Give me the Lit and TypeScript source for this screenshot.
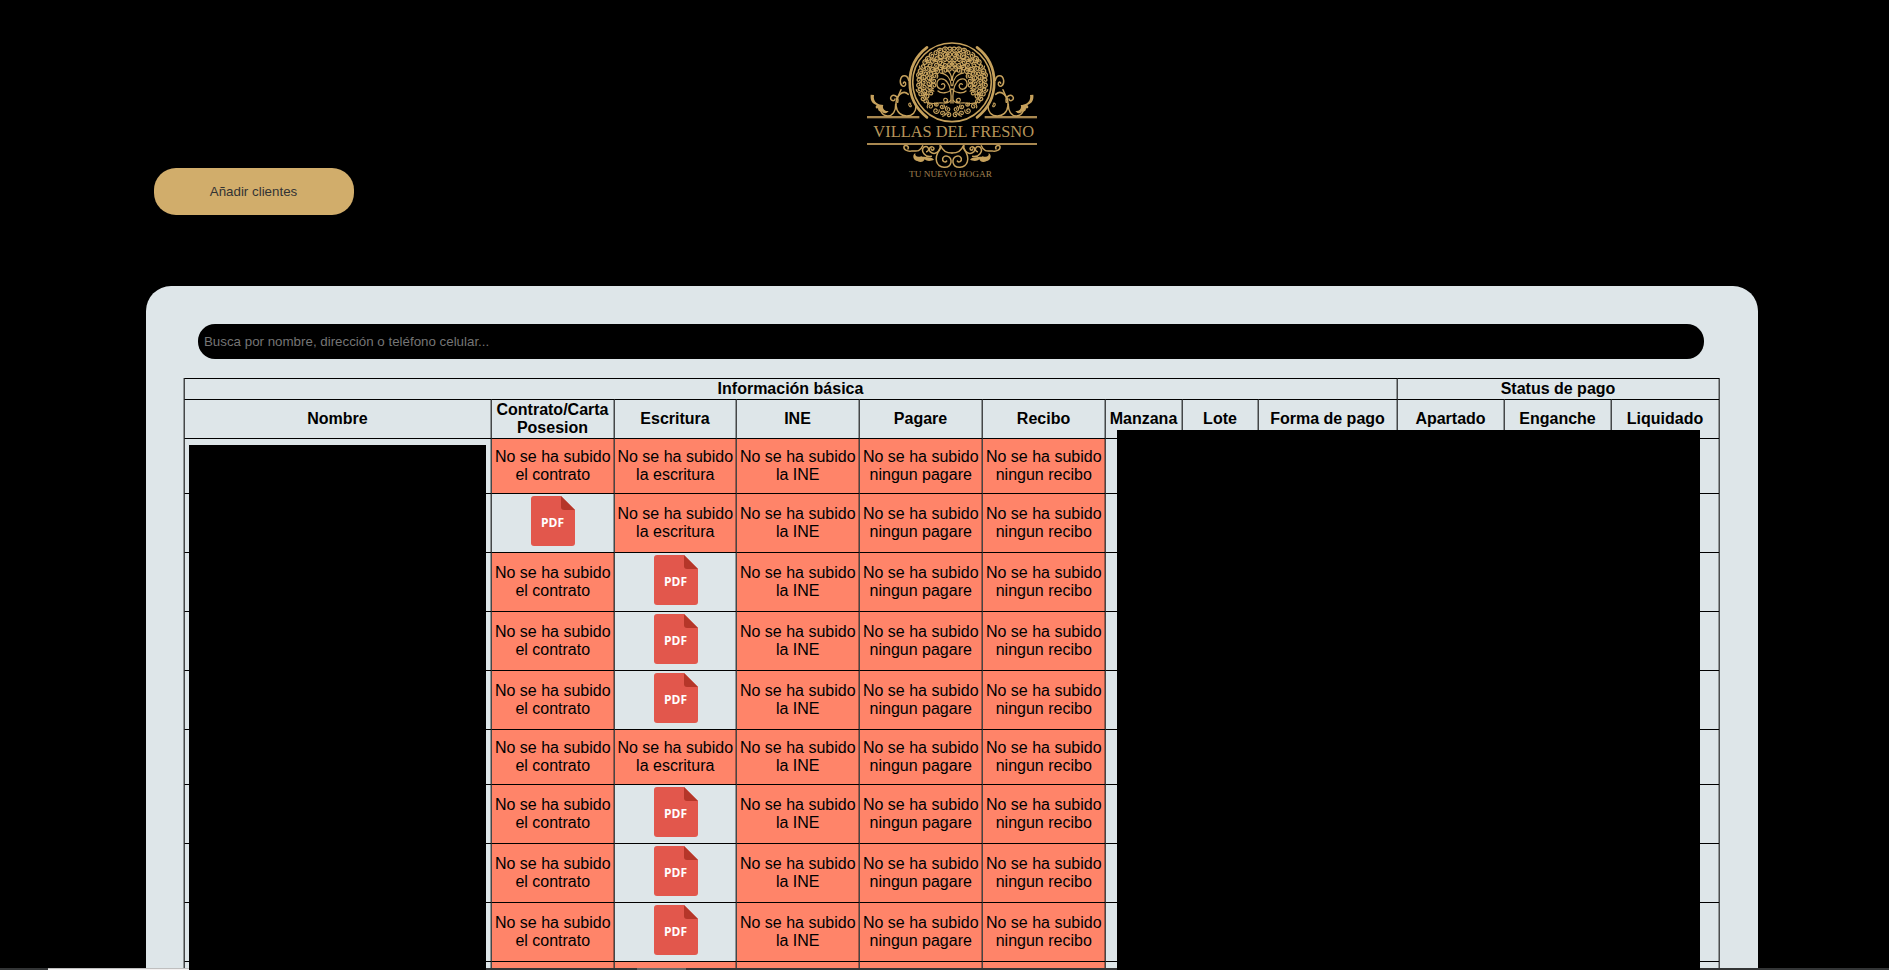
import { LitElement, html, css, svg } from "lit";
import { customElement, property } from "lit/decorators.js";
import { classMap } from "lit/directives/class-map.js";

const spiral = (cx: number, cy: number, r: number, start: number, dir: number, turns = 1.3) => {
  const steps = 16;
  let d = "";
  for (let i = 0; i <= steps; i++) {
    const t = i / steps;
    const a = start + dir * t * turns * Math.PI * 2;
    const k = r * (1 - t * 0.78);
    d += `${i ? "L" : "M"}${(cx + Math.cos(a) * k).toFixed(1)} ${(cy + Math.sin(a) * k).toFixed(1)}`;
  }
  return d;
};

/* Right half of the tree crown: concentric bands of curls around the medallion centre. */
const crown = () => {
  let d = "";
  let n = 0;
  for (const radius of [100, 85, 70, 55, 41]) {
    const count = Math.round((radius * 2.15) / 14.5);
    for (let i = 0; i < count; i++) {
      const a = -Math.PI / 2 + ((i + 0.5) * 2.15) / count;
      const x = Math.cos(a) * radius;
      const y = Math.sin(a) * radius;
      n++;
      if (y > -26 && x < 50) continue;
      d += spiral(x, y, 9.5, a + n * 2.4, n % 3 ? 1 : -1);
    }
  }
  return d;
};

const roots = () => {
  const spots = [[10, 98, 9], [29, 93, 9], [48, 85, 10], [12, 80, 9], [65, 72, 10], [79, 57, 9], [30, 73, 8], [46, 66, 7]];
  return spots.map(([x, y, r], i) => spiral(x, y, r, i * 1.7, i % 2 ? 1 : -1)).join("");
};

@customElement("villas-logo")
export class VillasLogo extends LitElement {
  static styles = css`
    :host { display: block; width: 200px; height: 155px; }
    svg { display: block; width: 100%; height: 100%; }
    .line { fill: none; stroke: #c6a15c; stroke-linecap: round; stroke-linejoin: round; }
    .leaf { fill: #c6a15c; }
    .rule { fill: #a98850; }
    .name { font: 47px "Liberation Serif", serif; fill: #b8965a; }
    .motto { font: 27px "Liberation Serif", serif; fill: #a08250; }
  `;

  private half() {
    return svg`
      <path class="line" stroke-width="3.8" d=${crown()}></path>
      <path class="line" stroke-width="3.4" d=${roots()}></path>
      <path class="line" stroke-width="4" d="M3 62C1 30 4 12 14 0C24 -14 42 -14 45 2C47 18 30 26 23 16C18 8 26 0 31 6"></path>
      <path class="line" stroke-width="4" d="M2 10C4 -12 12 -24 34 -28M1 -6C1 -24 6 -32 16 -36M1 20C10 34 34 34 42 26"></path>
      <path class="line" stroke-width="3.5" d="M4 54C10 68 26 60 40 62S62 66 74 60M14 58C10 48 22 44 25 52C26 59 18 62 16 56"></path>
      <path class="line" stroke-width="8" stroke-linecap="butt" d="M75 -105C144 -52 144 52 75 105"></path>
      <path class="line" stroke-width="4.5" d="M130 -6C134 -24 152 -24 155 -6C157 10 142 18 139 6C138 -2 146 -3 146 3"></path>
      <path class="line" stroke-width="4.5" d="M131 36C148 20 170 42 168 70C166 90 152 101 136 101C118 101 108 88 108 72"></path>
      <path class="line" stroke-width="3.5" d="M124 63C130 60 132 68 127 72C123 76 120 70 124 67"></path>
      <path class="line" stroke-width="4.5" d="M153 22C158 34 160 42 166 50M163 60C158 40 180 32 184 46C185 56 172 58 171 50M169 66C168 86 178 101 193 101C206 101 212 92 216 80"></path>
      <path class="leaf" d="M190 86C204 88 210 76 206 68C220 68 238 60 234 38L244 37C246 56 238 64 226 68C232 74 228 80 222 78C222 86 216 90 210 87C206 96 196 94 190 86Z"></path>
      <path class="line" stroke-width="4.5" d="M34 190C28 206 14 212 0 212M36 198C46 214 50 226 46 238C40 258 8 262 3 240C1 222 22 214 28 228C30 238 20 242 16 236"></path>
      <path class="line" stroke-width="4.5" d="M36 190C32 204 50 222 66 208C74 196 58 188 54 198C54 206 62 204 62 200"></path>
      <path class="line" stroke-width="4.5" d="M62 222C80 226 96 206 84 194C72 188 64 204 76 208"></path>
      <path class="line" stroke-width="4.5" d="M88 190C98 214 112 204 122 206C134 208 146 202 144 192C138 186 128 192 132 200"></path>
      <path class="leaf" d="M54 232C62 222 84 226 92 222C104 226 112 222 110 212C122 220 114 236 104 236C94 243 84 238 82 231C74 238 62 236 54 232Z"></path>
    `;
  }

  render() {
    return html`<svg viewBox="0 0 600 465" role="img" aria-label="Villas del Fresno">
      <rect class="rule" x="51" y="258" width="157" height="7"></rect>
      <rect class="rule" x="404" y="258" width="157" height="7"></rect>
      <rect class="rule" x="51" y="339" width="510" height="6"></rect>
      <circle class="line" cx="306" cy="157" r="118" stroke-width="5"></circle>
      <g transform="translate(306 157)">${this.half()}</g>
      <g transform="translate(306 157) scale(-1 1)">${this.half()}</g>
      <text class="name" x="70" y="322" textLength="482" lengthAdjust="spacingAndGlyphs">VILLAS DEL FRESNO</text>
      <text class="motto" x="177" y="440" textLength="249" lengthAdjust="spacingAndGlyphs">TU NUEVO HOGAR</text>
    </svg>`;
  }
}

@customElement("pdf-icon")
export class PdfIcon extends LitElement {
  static styles = css`
    :host { display: block; width: 44px; height: 50px; }
    svg { display: block; }
    .sheet { fill: #e2574c; }
    .fold { fill: #b53629; }
    .label { font: bold 12.5px "Open Sans", sans-serif; fill: #fff; }
  `;
  render() {
    return html`<svg width="44" height="50" viewBox="0 0 44 50">
      <path class="sheet" d="M3 0H30L44 14V47A3 3 0 0 1 41 50H3A3 3 0 0 1 0 47V3A3 3 0 0 1 3 0Z"></path>
      <path class="fold" d="M30 0L44 14H33A3 3 0 0 1 30 11Z"></path>
      <text class="label" x="10" y="31" textLength="23" lengthAdjust="spacingAndGlyphs">PDF</text>
    </svg>`;
  }
}

const DOCS = ["el contrato", "la escritura", "la INE", "ningun pagare", "ningun recibo"];
const HEADERS = ["Nombre", "Contrato/Carta Posesion", "Escritura", "INE", "Pagare", "Recibo",
  "Manzana", "Lote", "Forma de pago", "Apartado", "Enganche", "Liquidado"];
/* Index of the uploaded document of each client, -1 when there is none. */
const CLIENTS = [-1, 0, 1, 1, 1, -1, 1, 1, 1];

@customElement("client-table")
export class ClientTable extends LitElement {
  @property({ attribute: false }) clients: number[] = [];

  static styles = css`
    :host { display: block; width: 1536px; position: relative; }
    .row {
      display: grid; box-sizing: border-box; height: 59px;
      grid-template-columns: 307px 123px 122px 123px 123px 123px 77px 76px 139px 107px 107px 108px;
      border-right: 1px solid #4c4e4f; width: 1536px; box-shadow: inset -1px 0 #939899;
    }
    .group { height: 21px; }
    .head { height: 39px; }
    .short { height: 55px; }
    .next { height: 9px; }
    .cell {
      box-sizing: border-box; border-top: 1px solid #000; border-left: 1px solid #454748;
      box-shadow: -1px 0 rgba(0, 0, 0, 0.35);
      display: flex; align-items: center; justify-content: center; text-align: center;
      font-size: 16px; line-height: 18px; padding: 0 3px; min-width: 0;
    }
    .label { font-weight: bold; padding: 0 1px 0 0; }
    .missing { background: #ff8469; padding: 0 1.5px 0 1px; }
    .file { align-items: flex-start; padding: 2px 0 0; }
    .basic { grid-column: span 9; }
    .status { grid-column: span 3; }
    .cover { position: absolute; background: #000; bottom: 0; }
    .names { left: 5px; width: 297px; top: 67px; }
    .details { left: 933px; width: 583px; top: 52px; }
  `;

  render() {
    return html`
      <div class="row group">
        <div class="cell label basic">Información básica</div>
        <div class="cell label status">Status de pago</div>
      </div>
      <div class="row head">${HEADERS.map((h) => html`<div class="cell label">${h}</div>`)}</div>
      ${this.clients.map((doc) => html`
        <div class=${classMap({ row: true, short: doc < 0 })}>
          <div class="cell"></div>
          ${DOCS.map((name, i) => i === doc
            ? html`<div class="cell file"><pdf-icon></pdf-icon></div>`
            : html`<div class="cell missing"><span>No se ha subido<br>${name}</span></div>`)}
          ${[0, 1, 2, 3, 4, 5].map(() => html`<div class="cell"></div>`)}
        </div>`)}
      <div class="row next">
        ${HEADERS.map((_, i) => html`<div class=${classMap({ cell: true, missing: i > 0 && i < 6 })}></div>`)}
      </div>
      <div class="cover names"></div>
      <div class="cover details"></div>
    `;
  }
}

@customElement("app-root")
export class AppRoot extends LitElement {
  static styles = css`
    :host {
      display: block; position: relative; height: 970px; overflow: hidden; background: #000;
      font-family: "Liberation Sans", Arial, sans-serif; color: #000;
    }
    .top { display: flex; justify-content: center; padding: 30px 0 0 11px; height: 138px; box-sizing: border-box; }
    .actions { padding: 30px 0 0 154px; height: 148px; box-sizing: border-box; }
    .add {
      display: block; width: 200px; height: 47px; border: 0; border-radius: 22px; padding: 0 1px 0 0;
      background: #d1ad6b; color: #333; font: 13.333px "Liberation Sans", Arial, sans-serif;
    }
    .panel {
      box-sizing: border-box; margin-left: 145.5px; width: 1612px; height: 720px;
      background: #dee6e9; border-radius: 25px 25px 0 0; padding: 38px 38.5px 0;
    }
    .search {
      display: block; box-sizing: border-box; width: 1505.3px; height: 35px; margin: 0 0 19px 14.4px;
      border: 0; border-radius: 17px; background: #000; padding: 0 5.6px 1px; color: #fff;
      font: 13.333px "Liberation Sans", Arial, sans-serif;
    }
    .search::placeholder { color: #757575; opacity: 1; }
    .edge {
      position: absolute; left: 0; right: 0; bottom: 0; height: 2px; background: #333536;
      display: grid; grid-template-columns: 48px 141px 297px 151px 49px 431px 583px 1fr;
    }
    .light { background: #f3f1f1; border-top: 1px solid #bfbfbf; }
    .dark { background: #000; }
    .tab { background: #666; }
  `;

  render() {
    return html`
      <header class="top"><villas-logo></villas-logo></header>
      <div class="actions"><button class="add">Añadir clientes</button></div>
      <main class="panel">
        <input class="search" placeholder="Busca por nombre, dirección o teléfono celular...">
        <client-table .clients=${CLIENTS}></client-table>
      </main>
      <div class="edge">
        <i></i><i class="light"></i><i class="dark"></i><i></i><i class="tab"></i><i></i><i class="dark"></i><i></i>
      </div>
    `;
  }
}
